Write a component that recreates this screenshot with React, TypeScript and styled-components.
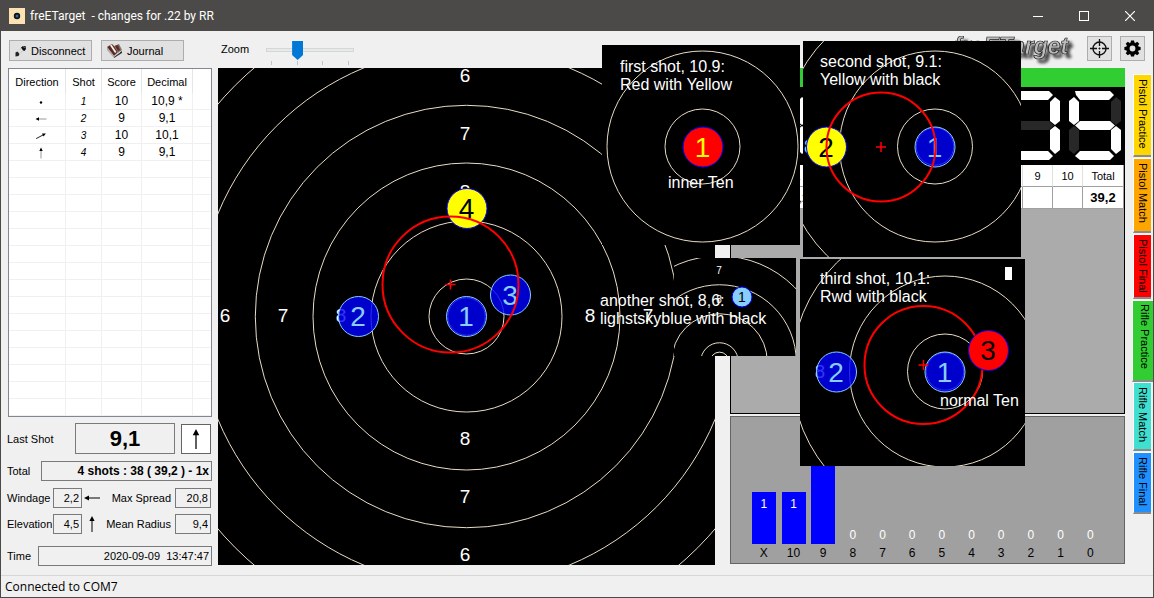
import React from "react";
import styled, { createGlobalStyle } from "styled-components";

const GlobalStyle = createGlobalStyle`
  *, *::before, *::after { box-sizing: border-box; }
  body {
    margin: 0;
    background: #f0f0f0;
    color: #000;
    font: 11px/16px "Liberation Sans", Arial, sans-serif;
  }
  button, input { font: inherit; color: inherit; margin: 0; border-radius: 0; }
`;

/* ---------- window frame ---------- */

const Window = styled.div`
  position: relative;
  display: flex;
  flex-direction: column;
  min-height: 100vh;
  overflow: hidden;
  border: 1px solid #4c4a48;
  border-top: 0;
`;

const TitleBar = styled.header`
  display: flex;
  align-items: center;
  height: 31px;
  padding-left: 8px;
  background: #4c4a48;
  color: #fff;
  font: 12px/16px Roboto, "Open Sans", sans-serif;
`;

const Title = styled.h1`
  flex: 1;
  margin: 0 0 0 5px;
  font: inherit;
  white-space: pre;
`;

const CaptionButton = styled.button`
  display: flex;
  align-items: center;
  justify-content: center;
  width: 46px;
  height: 30px;
  padding: 0;
  border: 0;
  background: none;
`;

const StatusBar = styled.footer`
  height: 22px;
  padding: 3px 4px;
  border-top: 1px solid #d7d7d7;
  font: 12px/16px "Open Sans", "Noto Sans", sans-serif;
`;

/* ---------- toolbar ---------- */

const Toolbar = styled.div`
  display: flex;
  align-items: flex-start;
  height: 37px;
  padding: 5px 8px 0;
`;

const ToolGroup = styled.div`
  display: flex;
  gap: 9px;
  padding-top: 4px;
`;

const ToolButton = styled.button`
  display: flex;
  align-items: center;
  gap: 4px;
  width: 83px;
  height: 21px;
  padding: 0 4px;
  border: 1px solid #adadad;
  background: #e1e1e1;
  white-space: nowrap;
`;

const IconButton = styled.button`
  display: flex;
  align-items: center;
  justify-content: center;
  width: 25px;
  height: 25px;
  padding: 0;
  border: 1px solid #adadad;
  background: #e1e1e1;
`;

const ZoomGroup = styled.div`
  display: flex;
  align-items: flex-start;
  gap: 17px;
  padding: 5px 0 0 37px;
`;

const SliderBox = styled.div`
  width: 88px;
`;

const Slider = styled.input`
  display: block;
  appearance: none;
  width: 100%;
  height: 18px;
  background: none;
  &::-webkit-slider-runnable-track {
    height: 4px;
    border: 1px solid #d6d6d6;
    background: #e7eaea;
  }
  &::-webkit-slider-thumb {
    appearance: none;
    width: 11px;
    height: 19px;
    margin-top: -8px;
    background: #0078d7;
    clip-path: polygon(0 0, 100% 0, 100% 74%, 50% 100%, 0 74%);
  }
`;

const Ticks = styled.div`
  display: flex;
  justify-content: space-between;
  padding: 2px 5px 0;
`;

const Tick = styled.span`
  width: 1px;
  height: 4px;
  background: #c4c4c4;
`;

const ToolRight = styled.div`
  display: flex;
  gap: 8px;
  margin-left: auto;
`;

/* ---------- main area ---------- */

const Main = styled.main`
  display: flex;
  flex: 1;
  align-items: flex-start;
  padding: 0 0 8px 7px;
`;

const Sidebar = styled.section`
  flex: none;
  width: 204px;
  margin-right: 6px;
`;

const ShotTable = styled.table`
  width: 100%;
  border: 1px solid #828790;
  border-collapse: separate;
  border-spacing: 0;
  background: #fff;
  table-layout: fixed;
  text-align: center;
`;

const ShotHead = styled.th`
  height: 24px;
  padding: 2px 0 0;
  border-right: 1px solid #e5e5e5;
  font-weight: 400;
  &:last-child { border-right: 0; }
`;

const ShotCell = styled.td<{ $italic?: boolean }>`
  height: 17px;
  padding: 1px 0 0;
  border-right: 1px solid #f0f0f0;
  border-bottom: 1px solid #f0f0f0;
  line-height: 15px;
  font-size: ${(p) => (p.$italic ? 10 : 12)}px;
  font-style: ${(p) => (p.$italic ? "italic" : "normal")};
  &:last-child { border-right: 0; }
  svg { display: block; margin: 0 auto; }
  &:first-child { padding-left: 8px; }
`;

const FieldRow = styled.div<{ $gap: number }>`
  display: flex;
  align-items: center;
  justify-content: space-between;
  margin-top: ${(p) => p.$gap}px;
`;

const Label = styled.label`
  margin-left: -1px;
  white-space: nowrap;
`;

const Field = styled.input<{ $width: number; $big?: boolean; $bold?: boolean }>`
  width: ${(p) => p.$width}px;
  height: ${(p) => (p.$big ? 31 : 20)}px;
  padding: 0 2px;
  border: 1px solid #7a7a7a;
  outline: 0;
  background: #f0f0f0;
  text-align: ${(p) => (p.$big ? "center" : "right")};
  font-size: ${(p) => (p.$big ? 22 : p.$bold ? 12 : 11)}px;
  font-weight: ${(p) => (p.$big || p.$bold ? 700 : 400)};
`;

const ArrowBox = styled.div`
  display: flex;
  align-items: center;
  justify-content: center;
  width: 30px;
  height: 30px;
  margin: 0 1px 0 6px;
  border: 1px solid #646464;
  background: #fff;
`;

const Stats = styled.div`
  display: grid;
  grid-template-columns: 45px 29px 20px 1fr 36px;
  align-items: center;
  row-gap: 6px;
  margin: 7px 1px 0 0;
`;

const StatArrow = styled.span`
  display: flex;
  justify-content: center;
`;

const RightLabel = styled(Label)`
  text-align: right;
  padding-right: 4px;
`;

const TargetView = styled.svg`
  flex: none;
  display: block;
  background: #000;
`;

const Results = styled.section`
  flex: 1;
  min-width: 0;
  margin-left: 15px;
`;

const Board = styled.div`
  height: 346px;
  border: 1px solid #000;
  border-top: 0;
  background: #ababab;
`;

const SeriesBar = styled.div`
  height: 19px;
  margin: 0 -1px;
  background: #32cd32;
`;

const Led = styled.div`
  display: flex;
  justify-content: flex-end;
  gap: 9px;
  height: 78px;
  padding: 4px 3px 0 24px;
  background: #000;
`;

const LedLead = styled.span`
  margin-right: auto;
`;

const Rounds = styled.table`
  width: 100%;
  border-right: 1px solid #a0a0a0;
  border-collapse: separate;
  border-spacing: 0;
  table-layout: fixed;
  background: #fff;
  text-align: center;
`;

const RoundHead = styled.th<{ $width?: number }>`
  width: ${(p) => (p.$width ? p.$width + "px" : "auto")};
  height: 22px;
  padding: 0;
  border-right: 1px solid #e0e0e0;
  border-bottom: 1px solid #a0a0a0;
  font-weight: 400;
  font-size: 11px;
  &:last-child { border-right: 0; }
`;

const RoundCell = styled.td<{ $bold?: boolean }>`
  height: 22px;
  padding: 0;
  border-right: 1px solid #a0a0a0;
  border-bottom: 1px solid #a0a0a0;
  font-size: ${(p) => (p.$bold ? 13 : 11)}px;
  font-weight: ${(p) => (p.$bold ? 700 : 400)};
  &:last-child { border-right: 0; }
`;

const Chart = styled.div`
  display: flex;
  align-items: flex-end;
  height: 148px;
  margin-top: 2px;
  padding: 0 19px 1px 18px;
  border: 1px solid #646464;
  background: #a0a0a0;
  font-size: 12px;
`;

const ChartColumn = styled.div`
  flex: 1;
  display: flex;
  flex-direction: column;
  align-items: center;
`;

const Bar = styled.span<{ $value: number }>`
  width: 24px;
  height: ${(p) => (p.$value ? p.$value * 52 : 17)}px;
  padding-top: ${(p) => (p.$value ? 4 : 0)}px;
  background: ${(p) => (p.$value ? "#0000ff" : "none")};
  color: #fff;
  text-align: center;
`;

const ChartLabel = styled.span`
  height: 18px;
  line-height: 18px;
`;

const Tabs = styled.div`
  display: flex;
  flex-direction: column;
  align-items: flex-end;
  flex: none;
  width: 28px;
  padding-top: 6px;
`;

const Tab = styled.button<{ $color: string; $length: number; $active?: boolean }>`
  display: flex;
  align-items: center;
  writing-mode: vertical-rl;
  width: ${(p) => (p.$active ? 21 : 18)}px;
  height: ${(p) => p.$length}px;
  margin: ${(p) => (p.$active ? "0 0 0" : "0 2px 1px 0")};
  padding: ${(p) => (p.$active ? "3px 0 0 4px" : "4px 0 0")};
  border: solid;
  border-width: 1px 0 2px 1px;
  border-color: #fff #fff #8a8a8a #fff;
  background: ${(p) => p.$color};
  line-height: 16px;
  white-space: nowrap;
`;

const Callout = styled.svg<{ $x: number; $y: number }>`
  position: absolute;
  left: ${(p) => p.$x - 1}px;
  top: ${(p) => p.$y}px;
  overflow: visible;
`;

/* ---------- drawings ---------- */

const RING = "#eadcc6";
const RADII = [18.7, 37.5, 95.5, 153.5, 211.2, 269, 327];
const FONT = '"Liberation Sans", Arial, sans-serif';

function Rings({ cx, cy, scale = 1 }: { cx: number; cy: number; scale?: number }) {
  return (
    <g fill="none" stroke={RING}>
      {RADII.map((r) => (
        <circle key={r} cx={cx} cy={cy} r={r * scale} />
      ))}
    </g>
  );
}

type ShotKind = "old" | "yellow" | "red" | "redYellow";
const SHOT = {
  old: ["#0000ff", "#87cefa", "#87cefa"],
  yellow: ["#ffff00", "#0000ff", "#000"],
  red: ["#ff0000", "#0000ff", "#000"],
  redYellow: ["#ff0000", "#0000ff", "#ffff00"],
};

function Shot({ x, y, n, kind = "old" }: { x: number; y: number; n: number; kind?: ShotKind }) {
  const [fill, stroke, text] = SHOT[kind];
  return (
    <g>
      <circle cx={x} cy={y} r="20" fill={fill} fillOpacity={kind === "old" ? 0.8 : 1} stroke={stroke} />
      <text x={x - 0.5} y={y + 9.5} fill={text} fontSize="28" textAnchor="middle" fontFamily={FONT}>{n}</text>
    </g>
  );
}

function Group({ x, y, r }: { x: number; y: number; r: number }) {
  return (
    <g fill="none" stroke="#ff0000" strokeWidth="2">
      <circle cx={x} cy={y} r={r} />
      <path d={`M${x - 5} ${y}h10M${x} ${y - 5}v10`} strokeWidth="1.5" />
    </g>
  );
}

function Note({ x, y, lines }: { x: number; y: number; lines: string[] }) {
  return (
    <text fill="#fff" fontSize="16" fontFamily={FONT}>
      {lines.map((l, i) => (
        <tspan key={l} x={x} y={y + i * 18}>{l}</tspan>
      ))}
    </text>
  );
}

const LABELS: [number, number, number][] = [
  [247, 7, 6], [247, 65, 7], [247, 123, 8], [247, 370, 8], [247, 428, 7], [247, 486, 6],
  [7, 247, 6], [65, 247, 7], [123, 247, 8], [372, 247, 8], [430, 247, 7],
];

function Target() {
  return (
    <TargetView width="497" height="497" viewBox="0 0 497 497" role="img" aria-label="Target">
      <Rings cx={248.5} cy={248.5} />
      <g fill="#fff" fontSize="19" textAnchor="middle" fontFamily={FONT}>
        {LABELS.map(([x, y, n]) => (
          <text key={`${x}-${y}`} x={x} y={y + 7}>{n}</text>
        ))}
      </g>
      <Shot x={248.5} y={248.5} n={1} />
      <Shot x={140.5} y={248.5} n={2} />
      <Shot x={292.5} y={227} n={3} />
      <Shot x={249} y={140.5} n={4} kind="yellow" />
      <Group x={232.5} y={216.5} r={68} />
    </TargetView>
  );
}

function Arrow({ angle, length = 16 }: { angle: number; length?: number }) {
  return (
    <svg width={length} height={length} viewBox="0 0 16 16">
      <g transform={`rotate(${angle} 8 8)`}>
        <path d="M8 16V3" stroke="#000" strokeWidth="1" />
        <path d="M8 0L5.400 5H10.600Z" />
      </g>
    </svg>
  );
}

function Direction({ angle }: { angle: number | null }) {
  return (
    <svg width="16" height="14" viewBox="0 0 16 14">
      {angle === null ? (
        <circle cx="8" cy="7.5" r="1.2" />
      ) : (
        <g transform={`rotate(${angle} 8 7)`}>
          <path d="M8 12.5V4" stroke={angle === 62 ? "#222" : "#999"} />
          <path d="M8 1.5L6.300 5H9.700Z" />
        </g>
      )}
    </svg>
  );
}

const SEGMENTS: Record<string, string> = {
  a: "M6 0H41L45 4L40 9H11L7 4Z",
  b: "M47 6L52 10V30L47 34L42 30V11Z",
  c: "M47 35L52 39V59L47 63L42 58V39Z",
  d: "M11 60H40L45 65L41 69H11L6 65Z",
  e: "M5 35L10 39V58L5 63L0 59V39Z",
  f: "M5 6L10 11V30L5 34L0 30V10Z",
  g: "M11 30H41L46 34.500L41 39H11L6 34.500Z",
};
const LIT: Record<string, string> = { "3": "abgcd", "0": "abcdef", "5": "afgcd", "9": "abcdfg" };

function LedDigit({ value }: { value: string }) {
  return (
    <svg width="52" height="69" viewBox="0 0 52 69" aria-label={value}>
      {Object.entries(SEGMENTS).map(([k, d]) => (
        <path key={k} d={d} fill={LIT[value].includes(k) ? "#fff" : "#282828"} />
      ))}
    </svg>
  );
}

const AppIcon = () => (
  <svg width="16" height="16" viewBox="0 0 16 16">
    <rect width="16" height="16" fill="#fbe2b4" />
    <circle cx="8" cy="8" r="3.200" fill="#111" />
    <circle cx="8" cy="8" r="1.500" fill="#1d6fa5" />
  </svg>
);

const PlugIcon = () => (
  <svg width="13" height="12" viewBox="0 0 13 12">
    <path d="M7 2.500L9 1L11.500 1L12 4L10.500 6L9 5.500Z" fill="#111" />
    <path d="M1.500 7.500L3.500 6.500L5.500 9L4.500 11L1.500 11.500Z" fill="#222" />
    <path d="M6 4.500L7 3.500M7 7.500L8 6.500" stroke="#aaa" />
    <path d="M9 1.500L11 2.500" stroke="#999" strokeWidth=".8" />
  </svg>
);

const JournalIcon = () => (
  <svg width="17" height="16" viewBox="0 0 17 16">
    <path d="M1 4L6 1L13 8L8 13Z" fill="#5c2a20" />
    <path d="M8 3L13 1L16 7L12 10Z" fill="#777" />
    <path d="M9 3L12 2L14 7L12 8Z" fill="#6f2618" />
    <path d="M4 2.500L5.500 1.500L10.500 9L9 10Z" fill="#f4f0ec" />
    <path d="M1 4L8 13L8 15L1 7Z" fill="#aaa" />
    <path d="M8 13L16 8V10L8 15Z" fill="#333" />
    <path d="M8 13.500L14 9" stroke="#eee" strokeWidth=".8" />
  </svg>
);

const CrosshairIcon = () => (
  <svg width="19" height="19" viewBox="0 0 19 19" fill="none" stroke="#111">
    <circle cx="9.500" cy="9.500" r="6.500" strokeWidth="1.400" />
    <path d="M9.500 0V7M9.500 12V19M0 9.500H7M12 9.500H19" strokeWidth="1.300" />
    <path d="M9.500 8.500V10.500M8.500 9.500H10.500" />
  </svg>
);

const GearIcon = () => (
  <svg width="17" height="17" viewBox="0 0 17 17">
    <circle cx="8.500" cy="8.500" r="4.600" fill="none" stroke="#000" strokeWidth="3.400" />
    {[0, 45, 90, 135, 180, 225, 270, 315].map((a) => (
      <path key={a} d="M6.500 3L7 .4H10L10.500 3Z" transform={`rotate(${a} 8.500 8.500)`} />
    ))}
  </svg>
);

const Logo = () => (
  <svg width="128" height="30" viewBox="0 0 128 30" role="img" aria-label="freETarget">
    <defs>
      <filter id="logoShadow" x="-10%" y="-20%" width="125%" height="160%">
        <feDropShadow dx="4" dy="4" stdDeviation="1.500" floodColor="#000" floodOpacity=".75" />
      </filter>
    </defs>
    <text x="3" y="18" fontFamily={FONT} fontSize="23" fontWeight="700" fontStyle="italic"
      fill="#bcbcbc" stroke="#1a1a1a" strokeWidth=".7" filter="url(#logoShadow)">freETarget</text>
  </svg>
);

/* ---------- data ---------- */

const SHOTS: [number | null, string, string, string][] = [
  [null, "1", "10", "10,9 *"],
  [270, "2", "9", "9,1"],
  [62, "3", "10", "10,1"],
  [0, "4", "9", "9,1"],
];
const EMPTY_ROWS = 15;

const HISTOGRAM: [string, number][] = [
  ["X", 1], ["10", 1], ["9", 2], ["8", 0], ["7", 0], ["6", 0],
  ["5", 0], ["4", 0], ["3", 0], ["2", 0], ["1", 0], ["0", 0],
];

const TABS: [string, string, number][] = [
  ["Pistol Practice", "#ffd700", 83],
  ["Pistol Match", "#ffa500", 75],
  ["Pistol Final", "#ff0000", 65],
  ["Rifle Practice", "#32cd32", 82],
  ["Rifle Match", "#40e0d0", 69],
  ["Rifle Final", "#1e90ff", 62],
];

export default function App() {
  return (
    <Window>
      <GlobalStyle />
      <TitleBar>
        <AppIcon />
        <Title>{"freETarget  - changes for .22 by RR"}</Title>
        <CaptionButton aria-label="Minimize">
          <svg width="10" height="10"><path d="M0 5.500H10" stroke="#fff" /></svg>
        </CaptionButton>
        <CaptionButton aria-label="Maximize">
          <svg width="10" height="10"><rect x=".5" y=".5" width="9" height="9" fill="none" stroke="#fff" /></svg>
        </CaptionButton>
        <CaptionButton aria-label="Close">
          <svg width="10" height="10"><path d="M0 0L10 10M10 0L0 10" stroke="#fff" strokeWidth="1.200" /></svg>
        </CaptionButton>
      </TitleBar>

      <Toolbar>
        <ToolGroup>
          <ToolButton><PlugIcon />Disconnect</ToolButton>
          <ToolButton><JournalIcon />Journal</ToolButton>
        </ToolGroup>
        <ZoomGroup>
          <label htmlFor="zoom">Zoom</label>
          <SliderBox>
            <Slider id="zoom" type="range" min="0" max="3" defaultValue="1" />
            <Ticks><Tick /><Tick /><Tick /><Tick /></Ticks>
          </SliderBox>
        </ZoomGroup>
        <ToolRight>
          <Logo />
          <IconButton aria-label="Calibrate"><CrosshairIcon /></IconButton>
          <IconButton aria-label="Settings"><GearIcon /></IconButton>
        </ToolRight>
      </Toolbar>

      <Main>
        <Sidebar>
          <ShotTable>
            <colgroup>
              <col width="57" /><col width="36" /><col width="40" /><col width="51" /><col />
            </colgroup>
            <thead>
              <tr>
                <ShotHead>Direction</ShotHead>
                <ShotHead>Shot</ShotHead>
                <ShotHead>Score</ShotHead>
                <ShotHead>Decimal</ShotHead>
                <ShotHead />
              </tr>
            </thead>
            <tbody>
              {SHOTS.map(([angle, shot, score, decimal]) => (
                <tr key={shot}>
                  <ShotCell><Direction angle={angle} /></ShotCell>
                  <ShotCell $italic>{shot}</ShotCell>
                  <ShotCell>{score}</ShotCell>
                  <ShotCell>{decimal}</ShotCell>
                  <ShotCell />
                </tr>
              ))}
              {Array.from({ length: EMPTY_ROWS }, (_, i) => (
                <tr key={i}>
                  <ShotCell /><ShotCell /><ShotCell /><ShotCell /><ShotCell />
                </tr>
              ))}
            </tbody>
          </ShotTable>

          <FieldRow $gap={6}>
            <Label htmlFor="last">Last Shot</Label>
            <FieldRow $gap={0}>
              <Field id="last" $width={100} $big readOnly value="9,1" />
              <ArrowBox><Arrow angle={0} length={20} /></ArrowBox>
            </FieldRow>
          </FieldRow>
          <FieldRow $gap={7}>
            <Label htmlFor="total">Total</Label>
            <Field id="total" $width={171} $bold readOnly value="4 shots : 38 ( 39,2 ) - 1x" />
          </FieldRow>
          <Stats>
            <Label htmlFor="windage">Windage</Label>
            <Field id="windage" $width={29} readOnly value="2,2" />
            <StatArrow><Arrow angle={270} /></StatArrow>
            <RightLabel htmlFor="spread">Max Spread</RightLabel>
            <Field id="spread" $width={36} readOnly value="20,8" />
            <Label htmlFor="elevation">Elevation</Label>
            <Field id="elevation" $width={29} readOnly value="4,5" />
            <StatArrow><Arrow angle={0} /></StatArrow>
            <RightLabel htmlFor="radius">Mean Radius</RightLabel>
            <Field id="radius" $width={36} readOnly value="9,4" />
          </Stats>
          <FieldRow $gap={12}>
            <Label htmlFor="time">Time</Label>
            <Field id="time" $width={174} readOnly value="2020-09-09  13:47:47" />
          </FieldRow>
        </Sidebar>

        <Target />

        <Results>
          <Board>
            <SeriesBar />
            <Led>
              <LedLead><LedDigit value="3" /></LedLead>
              <LedDigit value="9" />
              <LedDigit value="0" />
              <LedDigit value="5" />
            </Led>
            <Rounds>
              <thead>
                <tr>
                  <RoundHead />
                  {Array.from({ length: 10 }, (_, i) => (
                    <RoundHead key={i} $width={30}>{i + 1}</RoundHead>
                  ))}
                  <RoundHead $width={40}>Total</RoundHead>
                </tr>
              </thead>
              <tbody>
                <tr>
                  <RoundCell />
                  <RoundCell>39,2</RoundCell>
                  {Array.from({ length: 9 }, (_, i) => (
                    <RoundCell key={i} />
                  ))}
                  <RoundCell $bold>39,2</RoundCell>
                </tr>
              </tbody>
            </Rounds>
          </Board>
          <Chart>
            {HISTOGRAM.map(([label, value]) => (
              <ChartColumn key={label}>
                <Bar $value={value}>{value}</Bar>
                <ChartLabel>{label}</ChartLabel>
              </ChartColumn>
            ))}
          </Chart>
        </Results>

        <Tabs role="tablist">
          {TABS.map(([name, color, length]) => {
            const active = name === "Rifle Practice";
            return (
              <Tab key={name} role="tab" aria-selected={active} $color={color} $length={length} $active={active}>
                {name}
              </Tab>
            );
          })}
        </Tabs>
      </Main>

      <StatusBar>Connected to COM7</StatusBar>

      <Callout $x={674} $y={258} width="122" height="98">
        <svg width="122" height="98">
          <rect width="122" height="98" />
          <Rings cx={45.500} cy={103.500} scale={0.5} />
          <g fill="#fff" fontSize="10" textAnchor="middle" fontFamily={FONT}>
            <text x="45" y="16">7</text>
            <text x="45" y="45">8</text>
          </g>
          <circle cx="68" cy="39" r="10" fill="#87cefa" stroke="#0000ff" />
          <text x="68" y="44" fontSize="14" textAnchor="middle" fontFamily={FONT}>1</text>
        </svg>
        <Note x={-74} y={48} lines={["another shot, 8,6:", "lighstskyblue with black"]} />
      </Callout>

      <Callout $x={602} $y={45} width="198" height="200">
        <rect width="198" height="200" />
        <g fill="none" stroke={RING}>
          <circle cx="100.500" cy="101.500" r="37.500" />
          <circle cx="100.500" cy="101.500" r="95.500" />
        </g>
        <Shot x={101} y={102} n={1} kind="redYellow" />
        <Note x={18} y={27} lines={["first shot, 10.9:", "Red with Yellow"]} />
        <Note x={66} y={143} lines={["inner Ten"]} />
      </Callout>

      <Callout $x={803} $y={41} width="218" height="216">
        <svg width="218" height="216">
          <rect width="218" height="216" />
          <Rings cx={132} cy={105.500} />
          <text x="6" y="112" fill="#87cefa" fontSize="18" textAnchor="middle" fontFamily={FONT}>8</text>
          <Shot x={132} y={106} n={1} />
          <Shot x={23.500} y={106} n={2} kind="yellow" />
          <Group x={78} y={106} r={54.500} />
          <Note x={17} y={26} lines={["second shot, 9.1:", "Yellow with black"]} />
        </svg>
      </Callout>

      <Callout $x={800} $y={259} width="225" height="207">
        <svg width="225" height="207">
          <rect width="225" height="207" />
          <Rings cx={145} cy={112.500} />
          <text x="20" y="119" fill="#fff" fontSize="18" textAnchor="middle" fontFamily={FONT}>8</text>
          <Shot x={145} y={113} n={1} />
          <Shot x={36.500} y={113} n={2} />
          <Group x={123.500} y={106} r={59} />
          <Shot x={188.500} y={91.500} n={3} kind="red" />
          <rect x="205" y="8" width="7" height="13" fill="#fff" />
          <Note x={20} y={25} lines={["third shot, 10,1:", "Rwd with black"]} />
          <Note x={140} y={147} lines={["normal Ten"]} />
        </svg>
      </Callout>
    </Window>
  );
}
